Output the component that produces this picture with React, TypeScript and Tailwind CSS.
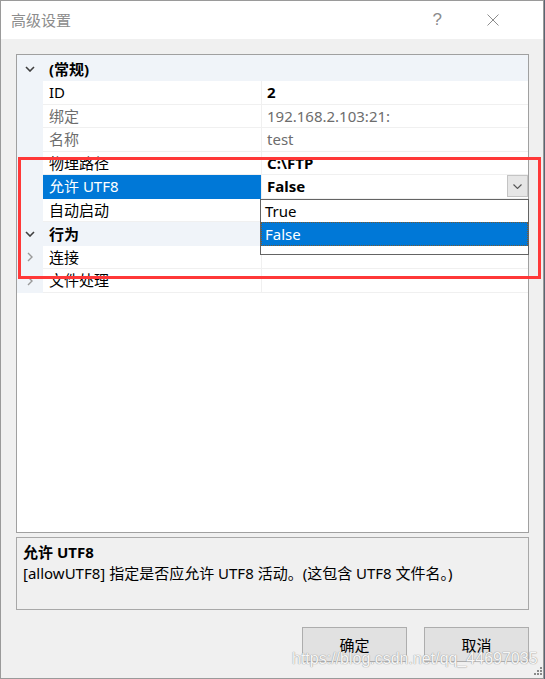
import React from "react";

function ChevronDown({ color = "#404040" }: { color?: string }) {
  return (
    <svg width="10" height="6" viewBox="0 0 10 6">
      <path d="M1 1 L5 5 L9 1" stroke={color} strokeWidth="1.6" fill="none" />
    </svg>
  );
}

function ChevronRight() {
  return (
    <svg width="6" height="10" viewBox="0 0 6 10">
      <path d="M1 1 L5 5 L1 9" stroke="#9a9a9a" strokeWidth="1.4" fill="none" />
    </svg>
  );
}

type Row =
  | { kind: "cat"; label: string; first?: boolean }
  | {
      kind: "prop";
      label: string;
      value?: string;
      gray?: boolean;
      bold?: boolean;
      selected?: boolean;
      combo?: boolean;
      expander?: boolean;
    };

const rows: Row[] = [
  { kind: "cat", label: "(常规)", first: true },
  { kind: "prop", label: "ID", value: "2", bold: true },
  { kind: "prop", label: "绑定", value: "192.168.2.103:21:", gray: true },
  { kind: "prop", label: "名称", value: "test", gray: true },
  { kind: "prop", label: "物理路径", value: "C:\\FTP", bold: true },
  { kind: "prop", label: "允许 UTF8", value: "False", bold: true, selected: true, combo: true },
  { kind: "prop", label: "自动启动", value: "" },
  { kind: "cat", label: "行为" },
  { kind: "prop", label: "连接", value: "", expander: true },
  { kind: "prop", label: "文件处理", value: "", expander: true },
];

function GridRow({ row }: { row: Row }) {
  if (row.kind === "cat") {
    return (
      <div
        className={
          row.first
            ? "flex h-[26px] items-end bg-[#f0f4f9] pb-[1px]"
            : "flex h-[23.5px] items-center bg-[#f0f4f9]"
        }
      >
        <div className="flex h-[22px] w-[26px] items-center justify-center">
          <ChevronDown />
        </div>
        <div className="flex h-[22px] items-center pl-[6px] text-[15px] font-bold leading-[20px] text-black">
          {row.label}
        </div>
      </div>
    );
  }
  return (
    <div className="flex h-[23.5px]">
      <div className="flex w-[26px] items-center justify-center bg-[#f0f4f9]">
        {row.expander ? <ChevronRight /> : null}
      </div>
      <div
        className={
          row.selected
            ? "flex w-[218px] items-center border-b border-[#0078d7] bg-[#0078d7] pl-[6px] text-[15px] leading-[20px] text-white"
            : row.gray
            ? "flex w-[218px] items-center border-b border-[#f0f0f0] bg-white pl-[6px] text-[15px] leading-[20px] text-[#6d6d6d]"
            : "flex w-[218px] items-center border-b border-[#f0f0f0] bg-white pl-[6px] text-[15px] leading-[20px] text-black"
        }
      >
        {row.label}
      </div>
      <div
        className={
          row.gray
            ? "flex flex-1 items-center border-b border-l border-[#f0f0f0] bg-white pl-[5px] text-[15px] leading-[20px] text-[#6d6d6d]"
            : row.bold
            ? "flex flex-1 items-center border-b border-l border-[#f0f0f0] bg-white pl-[5px] text-[15px] font-bold leading-[20px] text-black"
            : "flex flex-1 items-center border-b border-l border-[#f0f0f0] bg-white pl-[5px] text-[15px] leading-[20px] text-black"
        }
      >
        <span className="flex-1">{row.value}</span>
        {row.combo ? (
          <div className="mr-[0px] flex h-[22px] w-[21px] items-center justify-center border border-[#c4c4c4] bg-[#e6e6e6]">
            <svg width="9" height="5" viewBox="0 0 9 5">
              <path d="M0.5 0.5 L4.5 4.5 L8.5 0.5" stroke="#555" strokeWidth="1.1" fill="none" />
            </svg>
          </div>
        ) : null}
      </div>
    </div>
  );
}

export default function App() {
  return (
    <div className="relative h-[679px] w-[545px] overflow-hidden bg-[#5b6572] font-['Noto_Sans','Noto_Sans_CJK_SC',sans-serif]">
      <div className="flex h-[679px] w-[544px] flex-col border border-[#9a9a9a] bg-[#f0f0f0]">
        {/* Title bar */}
        <div className="flex h-[38px] items-center bg-white pl-[10px]">
          <span className="text-[15px] leading-[20px] text-[#8c8c8c]">高级设置</span>
          <div className="flex-1" />
          <span className="mr-[45px] text-[17px] leading-[20px] text-[#8c8c8c] font-['Liberation_Sans',sans-serif]">?</span>
          <svg width="12" height="12" viewBox="0 0 12 12" className="mr-[44px]">
            <path d="M0.5 0.5 L11.5 11.5 M11.5 0.5 L0.5 11.5" stroke="#8c8c8c" strokeWidth="1" />
          </svg>
        </div>

        {/* Body */}
        <div className="flex flex-1 flex-col pl-[15px] pt-[15px]">
          <div className="flex h-[479px] w-[513px] flex-col border border-[#a0a0a0] bg-white">
            {rows.map((r, i) => (
              <GridRow key={i} row={r} />
            ))}
          </div>

          <div className="mt-[4px] h-[73px] w-[513px] border border-[#a8a8a8] bg-[#f0f0f0] px-[6px] pt-[4px] text-[15px] leading-[21px] text-black">
            <div className="font-bold">允许 UTF8</div>
            <div>[allowUTF8] 指定是否应允许 UTF8 活动。(这包含 UTF8 文件名。)</div>
          </div>

          <div className="mt-[17px] flex w-[513px] justify-end gap-[17px]">
            <button className="flex h-[35px] w-[105px] items-center justify-center border border-[#adadad] bg-[#e1e1e1] text-[15px] leading-[20px] text-black">
              确定
            </button>
            <button className="flex h-[35px] w-[105px] items-center justify-center border border-[#adadad] bg-[#e1e1e1] text-[15px] leading-[20px] text-black">
              取消
            </button>
          </div>
        </div>
      </div>

      {/* Dropdown list overlay */}
      <div className="absolute left-[260px] top-[199px] h-[56px] w-[269px] border border-[#646464] bg-white text-[15px] leading-[20px]">
        <div className="flex h-[22px] items-center pl-[4px] text-black">True</div>
        <div className="flex h-[24px] items-center border border-dotted border-[#7a5a30] bg-[#0078d7] pl-[3px] text-white">
          False
        </div>
      </div>

      {/* Red annotation rectangle */}
      <div className="absolute left-[18px] top-[157px] h-[122px] w-[523px] border-[3px] border-[#ff3838]" />

      {/* Watermark */}
      <div className="absolute left-[292px] top-[649px] text-[16px] leading-[20px] text-[#f6f6f6] font-['Liberation_Sans',sans-serif] [text-shadow:0_0_1px_#9a9a9a,0_0_1px_#9a9a9a]">
        https://blog.csdn.net/qq_44697035
      </div>

      {/* Resize grip */}
      <svg className="absolute left-[534px] top-[667px]" width="9" height="9" viewBox="0 0 9 9">
        <rect x="6" y="0" width="2" height="2" fill="#8a8a8a" />
        <rect x="3" y="3" width="2" height="2" fill="#8a8a8a" />
        <rect x="6" y="3" width="2" height="2" fill="#8a8a8a" />
        <rect x="0" y="6" width="2" height="2" fill="#8a8a8a" />
        <rect x="3" y="6" width="2" height="2" fill="#8a8a8a" />
        <rect x="6" y="6" width="2" height="2" fill="#8a8a8a" />
      </svg>
    </div>
  );
}
